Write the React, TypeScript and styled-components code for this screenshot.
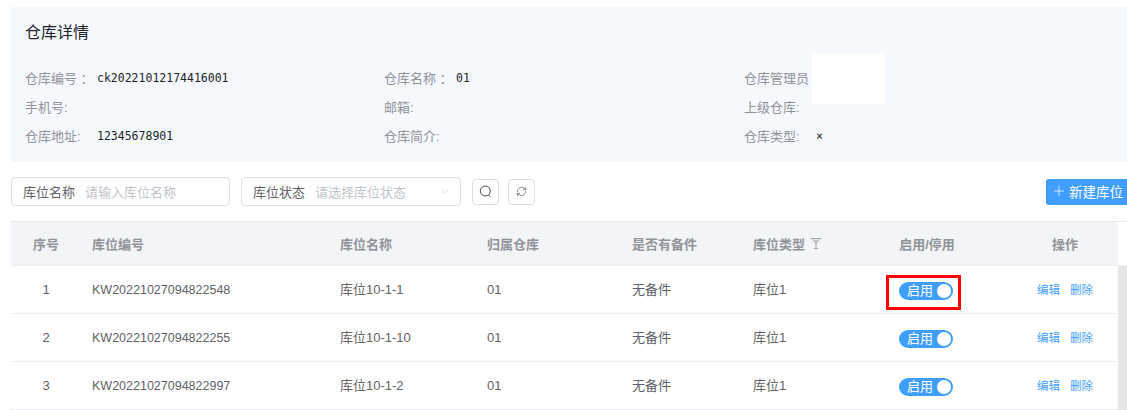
import React from "react";
import styled, { createGlobalStyle } from "styled-components";
import { ChevronDown, Plus, RefreshCw } from "lucide-react";

const GlobalStyle = createGlobalStyle`
	html, body {
		margin: 0;
		padding: 0;
		background: #fff;
		overflow: hidden;
	}
	body {
		font-family: "Liberation Sans", "Noto Sans CJK SC", sans-serif;
		font-size: 13px;
	}
`;

const Page = styled.div`
	width: 1127px;
	height: 410px;
	padding: 7px 0 0 11px;
	box-sizing: border-box;
	overflow: hidden;
`;

const DetailPanel = styled.section`
	height: 155px;
	box-sizing: border-box;
	padding: 14px 14px 0;
	background: #f5f9fd;
`;

const PanelTitle = styled.h2`
	margin: 0 0 18px;
	font-size: 16px;
	font-weight: 400;
	line-height: 24px;
	color: #1f2329;
`;

const DetailGrid = styled.div`
	display: grid;
	grid-template-columns: 359px 360px 1fr;
	grid-auto-rows: 29px;
`;

const DetailItem = styled.div`
	position: relative;
	display: flex;
	align-items: center;
`;

const DetailLabel = styled.span`
	width: 72px;
	flex: none;
	white-space: nowrap;
	color: #909399;
	font-size: 13px;
`;

const DetailValue = styled.span`
	font-family: "DejaVu Sans Mono", "Noto Sans CJK SC", monospace;
	font-size: 11.5px;
	color: #1f2329;
`;

/* blanked out area in the screenshot, sits over the panel */
const Redaction = styled.div`
	position: absolute;
	left: 68px;
	top: -10px;
	width: 73px;
	height: 51px;
	background: #fff;
`;

const Toolbar = styled.div`
	display: flex;
	align-items: center;
	height: 29px;
	margin: 15px 0;
`;

const Field = styled.div<{ $width: number }>`
	display: flex;
	align-items: center;
	width: ${(p) => p.$width}px;
	height: 29px;
	box-sizing: border-box;
	margin-right: 11px;
	padding: 0 11px 1px;
	border: 1px solid #dcdfe6;
	border-radius: 4px;
	font-size: 13px;
	color: #606266;
`;

const Placeholder = styled.span`
	flex: 1;
	margin-left: 10px;
	color: #c0c4cc;
`;

const IconButton = styled.button`
	display: flex;
	align-items: center;
	justify-content: center;
	width: 27px;
	height: 26px;
	margin-right: 9px;
	padding: 0;
	background: #fff;
	border: 1px solid #dcdfe6;
	border-radius: 4px;
	color: #4a4d52;
`;

const PrimaryButton = styled.button`
	display: flex;
	align-items: center;
	gap: 2px;
	width: 81px;
	height: 26px;
	margin-left: auto;
	padding: 0 0 1px 5px;
	box-sizing: border-box;
	white-space: nowrap;
	background: #409eff;
	border: 0;
	border-radius: 3px 0 0 3px;
	color: #fff;
	font-family: inherit;
	font-size: 13.5px;
`;

const COLUMNS = "70px 248px 147px 145px 121px 100px 170px 106px";

const TableHead = styled.div`
	display: grid;
	grid-template-columns: ${COLUMNS} 9px;
	height: 45px;
	box-sizing: border-box;
	border-top: 1px solid #e4e7ed;
	border-bottom: 1px solid #ebeef5;
`;

const HeadCell = styled.div<{ $center?: boolean }>`
	display: flex;
	align-items: center;
	justify-content: ${(p) => (p.$center ? "center" : "flex-start")};
	gap: 5px;
	padding-left: ${(p) => (p.$center ? 0 : 11)}px;
	padding-bottom: 1px;
	background: #f3f4f7;
	color: #909399;
	font-size: 13px;
	font-weight: 700;
`;

const TableBody = styled.div`
	display: flex;
`;

const Rows = styled.div`
	width: 1107px;
`;

const Scrollbar = styled.div`
	width: 9px;
	background: #e6e6e6;
`;

const Row = styled.div`
	display: grid;
	grid-template-columns: ${COLUMNS};
	height: 48px;
	box-sizing: border-box;
	border-bottom: 1px solid #ebeef5;
`;

const Cell = styled.div<{ $center?: boolean; $cjk?: boolean }>`
	display: flex;
	align-items: center;
	justify-content: ${(p) => (p.$center ? "center" : "flex-start")};
	padding-left: ${(p) => (p.$center ? 0 : 11)}px;
	padding-bottom: ${(p) => (p.$cjk ? 2 : 0)}px;
	color: #606266;
	font-size: 13px;
`;

const CodeCell = styled(Cell)`
	font-size: 12.5px;
`;

const Switch = styled.div<{ $marked?: boolean }>`
	position: relative;
	display: flex;
	align-items: center;
	width: 54px;
	height: 18px;
	box-sizing: border-box;
	margin: 3px 2px 0 0;
	padding: 0 2px 0 8px;
	background: #409eff;
	border-radius: 9px;
	color: #fff;
	font-size: 13px;

	${(p) =>
		p.$marked &&
		`&::after {
			content: "";
			position: absolute;
			left: -13px;
			top: -7px;
			width: 75px;
			height: 35px;
			box-sizing: border-box;
			border: 3px solid #f00;
		}`}
`;

const SwitchLabel = styled.span`
	margin-top: -3px;
`;

const SwitchKnob = styled.span`
	width: 14px;
	height: 14px;
	margin-left: auto;
	background: #fff;
	border-radius: 50%;
`;

const Actions = styled.div`
	display: flex;
	gap: 10px;
	color: #409eff;
	font-size: 11.5px;
	transform: translateY(-1px);
`;

const SelectArrow = styled(ChevronDown)`
	margin-right: -3px;
`;

const SearchIcon = () => (
	<svg width="13" height="13" viewBox="0 0 13 13" fill="none" stroke="currentColor" strokeWidth="1">
		<circle cx="6.3" cy="6" r="5" />
		<path d="M9.5 10L11.5 12" />
	</svg>
);

const FilterIcon = () => (
	<svg width="12" height="12" viewBox="0 0 12 12" fill="none" stroke="#a3a6ad" strokeWidth="1">
		<path d="M0.5 1.5H11.5M2 1.5L6 6.5L10 1.5M6 6.5V11.5M4 11.5H8M4 4H8" />
	</svg>
);

const rows = [
	{ no: 1, code: "KW20221027094822548", name: "库位10-1-1" },
	{ no: 2, code: "KW20221027094822255", name: "库位10-1-10" },
	{ no: 3, code: "KW20221027094822997", name: "库位10-1-2" },
];

const App = () => (
	<Page>
		<GlobalStyle />
		<DetailPanel>
			<PanelTitle>仓库详情</PanelTitle>
			<DetailGrid>
				<DetailItem>
					<DetailLabel>仓库编号 ：</DetailLabel>
					<DetailValue>ck20221012174416001</DetailValue>
				</DetailItem>
				<DetailItem>
					<DetailLabel>仓库名称 ：</DetailLabel>
					<DetailValue>01</DetailValue>
				</DetailItem>
				<DetailItem>
					<DetailLabel>仓库管理员</DetailLabel>
					<Redaction />
				</DetailItem>
				<DetailItem>
					<DetailLabel>手机号:</DetailLabel>
				</DetailItem>
				<DetailItem>
					<DetailLabel>邮箱:</DetailLabel>
				</DetailItem>
				<DetailItem>
					<DetailLabel>上级仓库:</DetailLabel>
				</DetailItem>
				<DetailItem>
					<DetailLabel>仓库地址:</DetailLabel>
					<DetailValue>12345678901</DetailValue>
				</DetailItem>
				<DetailItem>
					<DetailLabel>仓库简介:</DetailLabel>
				</DetailItem>
				<DetailItem>
					<DetailLabel>仓库类型:</DetailLabel>
					<DetailValue>×</DetailValue>
				</DetailItem>
			</DetailGrid>
		</DetailPanel>

		<Toolbar>
			<Field $width={219}>
				库位名称
				<Placeholder>请输入库位名称</Placeholder>
			</Field>
			<Field $width={220}>
				库位状态
				<Placeholder>请选择库位状态</Placeholder>
				<SelectArrow size={14} strokeWidth={1} color="#c0c4cc" />
			</Field>
			<IconButton>
				<SearchIcon />
			</IconButton>
			<IconButton>
				<RefreshCw size={11} strokeWidth={1.4} />
			</IconButton>
			<PrimaryButton>
				<Plus size={16} strokeWidth={1.1} />
				新建库位
			</PrimaryButton>
		</Toolbar>

		<TableHead>
			<HeadCell $center>序号</HeadCell>
			<HeadCell>库位编号</HeadCell>
			<HeadCell>库位名称</HeadCell>
			<HeadCell>归属仓库</HeadCell>
			<HeadCell>是否有备件</HeadCell>
			<HeadCell>
				库位类型
				<FilterIcon />
			</HeadCell>
			<HeadCell $center>启用/停用</HeadCell>
			<HeadCell $center>操作</HeadCell>
		</TableHead>
		<TableBody>
			<Rows>
				{rows.map((row, i) => (
					<Row key={row.no}>
						<Cell $center>{row.no}</Cell>
						<CodeCell>{row.code}</CodeCell>
						<Cell $cjk>{row.name}</Cell>
						<Cell>01</Cell>
						<Cell $cjk>无备件</Cell>
						<Cell $cjk>库位1</Cell>
						<Cell $center>
							<Switch $marked={i === 0}>
								<SwitchLabel>启用</SwitchLabel>
								<SwitchKnob />
							</Switch>
						</Cell>
						<Cell $center>
							<Actions>
								<span>编辑</span>
								<span>删除</span>
							</Actions>
						</Cell>
					</Row>
				))}
			</Rows>
			<Scrollbar />
		</TableBody>
	</Page>
);

export default App;
